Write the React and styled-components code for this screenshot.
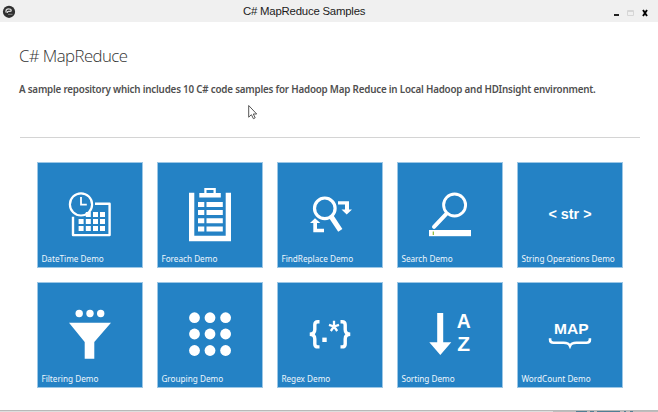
import React from 'react';
import styled, { createGlobalStyle } from 'styled-components';

const GlobalStyle = createGlobalStyle`
  * { box-sizing: border-box; }
  body { margin: 0; background: #fff; overflow: hidden; }
`;

const Window = styled.div`
  display: flex;
  flex-direction: column;
  position: relative;
  width: 658px;
  height: 412px;
  background: #fff;
  font-family: 'Open Sans', 'Noto Sans', sans-serif;
  overflow: hidden;
`;

const TitleBar = styled.header`
  display: grid;
  grid-template-columns: 243px 1fr auto;
  height: 22px;
  flex: none;
  background: #f0f0f0;
`;

const AppIcon = styled.svg`
  width: 14px;
  height: 14px;
  margin: 5px 0 0 2px;
`;

const Caption = styled.div`
  font: 11.4px/22px 'Liberation Sans', Arial, sans-serif;
  letter-spacing: -0.22px;
  color: #1c1c1c;
  white-space: nowrap;
`;

const WindowButtons = styled.svg`
  width: 46px;
  height: 22px;
`;

const Intro = styled.section`
  height: 116px;
  margin: 0 18px 0 20px;
  border-bottom: 1px solid #d4d4d4;
  flex: none;
`;

const Heading = styled.h1`
  margin: 21px 0 0 -1px;
  font-size: 16.8px;
  line-height: 26px;
  font-weight: 300;
  letter-spacing: -0.58px;
  color: #333;
  white-space: nowrap;
`;

const Summary = styled.p`
  margin: 13px 0 0 -1px;
  font-family: 'Noto Sans', 'Open Sans', sans-serif;
  font-size: 9.8px;
  letter-spacing: -0.2px;
  line-height: 16px;
  font-weight: 600;
  color: #505050;
  white-space: nowrap;
`;

const Tiles = styled.main`
  display: grid;
  grid-template-columns: repeat(5, 106px);
  grid-auto-rows: 106px;
  gap: 14px;
  margin: 24px 0 0 37px;
`;

const Tile = styled.button`
  display: grid;
  padding: 0;
  border: 1px solid #9cc7e6;
  background: #2482c5;
  color: #fff;
  font-family: inherit;
  text-align: left;
`;

const Picture = styled.svg`
  grid-area: 1 / 1;
  width: 106px;
  height: 106px;
  margin: -1px;
  fill: #fff;
`;

const Label = styled.span`
  grid-area: 1 / 1;
  align-self: end;
  margin: 0 0 1px 3.4px;
  font-family: 'Noto Sans', 'Open Sans', sans-serif;
  font-size: 8.2px;
  line-height: 14px;
  color: #eef6fc;
  white-space: nowrap;
`;

const GlyphText = styled.text`
  font-family: 'Liberation Sans', Arial, sans-serif;
  font-weight: bold;
  font-size: ${(p) => p.$size}px;
`;

const Pointer = styled.svg`
  position: absolute;
  left: 247px;
  top: 104px;
  width: 12px;
  height: 17px;
`;

const BottomEdge = styled.footer`
  display: flex;
  height: 2px;
  margin-top: auto;
  border-top: 1px solid #b9b9b9;
  background: linear-gradient(to right, #dedede 553px, #bdbdbd 553px);
`;

const EdgeMarks = styled.svg`
  width: 60px;
  height: 2px;
  margin: -1px 0 0 575px;
`;

const DateTimeIcon = () => (
  <>
    <circle cx="44" cy="42.4" r="11.1" fill="none" stroke="#fff" strokeWidth="2.2" />
    <path d="M44 35v7.6h5.8" fill="none" stroke="#fff" strokeWidth="1.8" />
    <path d="M58 41.7h14.6v31.4H36V54.8" fill="none" stroke="#fff" strokeWidth="2.4" strokeLinejoin="round" />
    {[50, 57, 64].map((y, r) =>
      [41.6, 48.8, 56, 63].map((x, c) =>
        r === 0 && c === 0 ? null : <rect key={`${x}-${y}`} x={x} y={y} width="5" height="5" />
      )
    )}
  </>
);

const ForeachIcon = () => (
  <>
    <path d="M32 30.8h5.3v43h31.4v-43H74V79.3H32z" />
    <path d="M42.3 31h5v-5h11.5v5h5v4.5H42.3zM49.5 28v3h7v-3z" fillRule="evenodd" />
    {[40, 48, 56.2, 64.5].map((y) => (
      <path key={y} d={`M41 ${y}h6.3v5H41zM49.5 ${y}h16.3v5H49.5z`} />
    ))}
  </>
);

const FindReplaceIcon = () => (
  <>
    <circle cx="47.8" cy="46.3" r="10.3" fill="none" stroke="#fff" strokeWidth="3.2" />
    <path d="M53.8 54l9.5 14.3" fill="none" stroke="#fff" strokeWidth="5" />
    <path d="M61 39.2h11v8.2h3l-5.3 5.2-5.2-5.2h3.5v-5H61z" />
    <path d="M33 61h3.3v9.2H47V66.7h-7V61h3.3L38 56.2z" />
  </>
);

const SearchIcon = () => (
  <>
    <circle cx="57.6" cy="43" r="11" fill="none" stroke="#fff" strokeWidth="2.9" />
    <path d="M49.3 51.8L37 64.8" stroke="#fff" strokeWidth="4" strokeLinecap="round" />
    <rect x="32" y="68" width="42" height="6.2" />
    <path d="M36.3 69.5v3.5" stroke="#8ab833" strokeWidth="1.2" />
  </>
);

const FilterIcon = () => (
  <>
    {[42.2, 53, 63.7].map((x) => <circle key={x} cx={x} cy="31.5" r="3.7" />)}
    <path d="M32 40.7h42L57.3 60v16.8h-9.6V60z" />
  </>
);

const GroupIcon = () =>
  [35.7, 52, 68.5].map((y) =>
    [37.5, 53, 68.6].map((x) => <circle key={`${x}-${y}`} cx={x} cy={y} r="5.4" />)
  );

const SortIcon = () => (
  <>
    <path d="M40.2 31h6v29.3h8.1L43.3 73 32.3 60.3h7.9z" />
    <GlyphText $size={19.5} x="59.8" y="46" textLength="14" lengthAdjust="spacingAndGlyphs">A</GlyphText>
    <GlyphText $size={19.5} x="60.2" y="68.7" textLength="12.8" lengthAdjust="spacingAndGlyphs">Z</GlyphText>
  </>
);

const StringIcon = () => (
  <GlyphText $size={13.8} x="31.5" y="57.3" textLength="43" lengthAdjust="spacingAndGlyphs">
    {'< str >'}
  </GlyphText>
);

const RegexIcon = () => (
  <>
    <path
      d="M42.5 39.7h-1.5q-3.2 0-3.2 3v4.8q0 4.5-5 4.7q5 .2 5 4.7v5q0 3 3.2 3h1.5M63.5 39.7h1.5q3.2 0 3.2 3v4.8q0 4.5 5 4.7q-5 .2-5 4.7v5q0 3-3.2 3h-1.5"
      fill="none" stroke="#fff" strokeWidth="3.4"
    />
    <rect x="45.3" y="55.6" width="4.4" height="4.4" />
    <path d="M57 44.5V38.8M57 44.5l-5-1.7M57 44.5l5-1.7M57 44.5l-3.2 4.5M57 44.5l3.2 4.5" fill="none" stroke="#fff" strokeWidth="2.3" />
  </>
);

const MapIcon = () => (
  <>
    <GlyphText $size={15.5} x="37" y="52.2" textLength="34.6" lengthAdjust="spacingAndGlyphs">MAP</GlyphText>
    <path
      d="M33.1 56.3v1.5q0 3 3.5 3h10q5 0 6.4 3.2q1.4-3.2 6.4-3.2h10q3.5 0 3.5-3v-1.5"
      fill="none" stroke="#fff" strokeWidth="2.6"
    />
  </>
);

const demos = [
  ['DateTime Demo', DateTimeIcon],
  ['Foreach Demo', ForeachIcon],
  ['FindReplace Demo', FindReplaceIcon],
  ['Search Demo', SearchIcon],
  ['String Operations Demo', StringIcon],
  ['Filtering Demo', FilterIcon],
  ['Grouping Demo', GroupIcon],
  ['Regex Demo', RegexIcon],
  ['Sorting Demo', SortIcon],
  ['WordCount Demo', MapIcon],
];

export default function App() {
  return (
    <Window>
      <GlobalStyle />
      <TitleBar>
        <AppIcon viewBox="0 0 14 14">
          <circle cx="7" cy="6.8" r="6.1" fill="#303030" />
          <path d="M4 7.5V6q0-2.2 2.6-2.2t2.6 1.6q0 1-1.4 1H6.5q-1.2 0-1.2 1.6" fill="none" stroke="#d8d8d8" strokeWidth="1.3" />
          <path d="M6 9.3h4.5" stroke="#888" strokeWidth="1" />
        </AppIcon>
        <Caption>C# MapReduce Samples</Caption>
        <WindowButtons viewBox="0 0 46 22">
          <rect x="2" y="14" width="5" height="2" fill="#222" />
          <path d="M15.5 10.5h6v5h-6zM15.5 11.5h6" fill="none" stroke="#d6d6d6" />
          <path d="M31 10l4 6M35 10l-4 6" stroke="#000" strokeWidth="1.9" />
        </WindowButtons>
      </TitleBar>
      <Intro>
        <Heading>C# MapReduce</Heading>
        <Summary>
          A sample repository which includes 10 C# code samples for Hadoop Map Reduce in Local Hadoop and HDInsight environment.
        </Summary>
      </Intro>
      <Tiles>
        {demos.map(([name, Icon]) => (
          <Tile key={name}>
            <Picture viewBox="0 0 106 106"><Icon /></Picture>
            <Label>{name}</Label>
          </Tile>
        ))}
      </Tiles>
      <BottomEdge>
        <EdgeMarks viewBox="0 0 60 2">
          <path d="M1 1.5h11M15 1.5h4M22 1.5h23M49 1.5h2M55 1.5h3" stroke="#527f94" />
        </EdgeMarks>
      </BottomEdge>
      <Pointer viewBox="0 0 12 17">
        <path d="M1.7 1.5v11.7l2.7-2.5 2 4 1.8-.9-1.9-3.8h3.4z" fill="#fff" stroke="#555" strokeWidth="1" />
      </Pointer>
    </Window>
  );
}
